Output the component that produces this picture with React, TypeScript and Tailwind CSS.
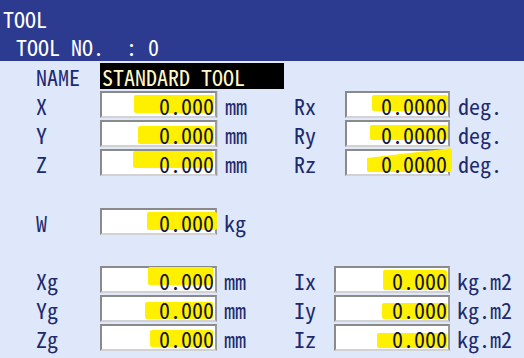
import React from 'react';

interface Row {
  label: string;
  value: string;
  unit: string;
  mark: string;
}

const mono = "font-['Noto_Sans_Mono_CJK_JP','Noto_Sans_CJK_JP','DejaVu_Sans_Mono',monospace]";

// highlighter strokes over the numbers (offsets inside the field border)
const position: Row[] = [
  { label: 'X', value: '0.000', unit: 'mm', mark: 'left-[32px] top-[2px] w-[80px] h-[18px]' },
  { label: 'Y', value: '0.000', unit: 'mm', mark: 'left-[36px] top-[4px] w-[76px] h-[18px]' },
  { label: 'Z', value: '0.000', unit: 'mm', mark: 'left-[31px] top-[0px] w-[80px] h-[17px]' },
];

const rotation: Row[] = [
  { label: 'Rx', value: '0.0000', unit: 'deg.', mark: 'left-[25px] top-[2px] w-[76px] h-[16px]' },
  { label: 'Ry', value: '0.0000', unit: 'deg.', mark: 'left-[23px] top-[3px] w-[78px] h-[15px]' },
  {
    label: 'Rz',
    value: '0.0000',
    unit: 'deg.',
    mark: 'left-[20px] top-[-3px] w-[85px] h-[24px] [clip-path:polygon(0_42%,100%_0,100%_100%,0_100%)]',
  },
];

const center: Row[] = [
  { label: 'Xg', value: '0.000', unit: 'mm', mark: 'left-[46px] top-[-1px] w-[65px] h-[18px]' },
  { label: 'Yg', value: '0.000', unit: 'mm', mark: 'left-[43px] top-[5px] w-[68px] h-[17px]' },
  { label: 'Zg', value: '0.000', unit: 'mm', mark: 'left-[48px] top-[4px] w-[63px] h-[17px]' },
];

const inertia: Row[] = [
  { label: 'Ix', value: '0.000', unit: 'kg.m2', mark: 'left-[47px] top-[2px] w-[64px] h-[20px]' },
  { label: 'Iy', value: '0.000', unit: 'kg.m2', mark: 'left-[46px] top-[6px] w-[65px] h-[16px]' },
  { label: 'Iz', value: '0.000', unit: 'kg.m2', mark: 'left-[41px] top-[7px] w-[70px] h-[15px]' },
];

const Field = ({ value, mark, className }: { value: string; mark: string; className: string }) => (
  <div
    className={`relative h-[27px] flex items-center justify-end pr-[1px] bg-white border-2 border-t-[#8a8a8a] border-l-[#8a8a8a] border-r-[#9a9a9a] border-b-[#d2d2d2] ${className}`}
  >
    <div className={`absolute bg-[#fff000] rounded-[2px] ${mark}`} />
    <span className="relative text-[#12163a]">{value}</span>
  </div>
);

const LeftCell = ({ row, boxed }: { row: Row; boxed?: boolean }) => (
  <div className="flex w-[294px] h-[27px]">
    <div className="w-[100px] pl-[36px] flex items-center">{row.label}</div>
    <Field value={row.value} mark={row.mark} className="w-[117px]" />
    <div className={`pl-[7px] flex items-center ${boxed ? 'w-[77px] border-l border-[#c6cfe3]' : ''}`}>
      {row.unit}
    </div>
  </div>
);

const App = () => {
  return (
    <div className={`w-[524px] h-[358px] overflow-hidden bg-[#dfe8fb] text-[#1d2a6e] text-[22px] leading-[22px] ${mono}`}>
      <div className="h-[61px] bg-[#2c3a8f] text-white pl-[3px] pt-[7px]">
        <div className="h-[28px]">TOOL</div>
        <div className="h-[28px] pl-[13px] whitespace-pre">TOOL NO.  : 0</div>
      </div>

      <div className="pt-[2px]">
        <div className="flex h-[26px] items-center">
          <div className="w-[100px] pl-[36px]">NAME</div>
          <div className="w-[184px] h-[26px] bg-black text-[#fff7c6] pl-[2px] flex items-center whitespace-pre">
            STANDARD TOOL
          </div>
        </div>

        <div className="mt-[2px]">
          {position.map((row, i) => (
            <div key={row.label} className="flex h-[29px]">
              <LeftCell row={row} boxed />
              <div className="flex h-[27px]">
                <div className="w-[51px] flex items-center">{rotation[i].label}</div>
                <Field value={rotation[i].value} mark={rotation[i].mark} className="w-[105px]" />
                <div className="pl-[8px] flex items-center">{rotation[i].unit}</div>
              </div>
            </div>
          ))}
        </div>

        <div className="mt-[30px] flex h-[29px]">
          <LeftCell
            row={{ label: 'W', value: '0.000', unit: 'kg', mark: 'left-[45px] top-[2px] w-[70px] h-[18px]' }}
          />
        </div>

        <div className="mt-[29px]">
          {center.map((row, i) => (
            <div key={row.label} className="flex h-[29px]">
              <LeftCell row={row} />
              <div className="flex h-[27px]">
                <div className="w-[40px] flex items-center">{inertia[i].label}</div>
                <Field value={inertia[i].value} mark={inertia[i].mark} className="w-[116px]" />
                <div className="pl-[7px] flex items-center">{inertia[i].unit}</div>
              </div>
            </div>
          ))}
        </div>
      </div>
    </div>
  );
};

export default App;
